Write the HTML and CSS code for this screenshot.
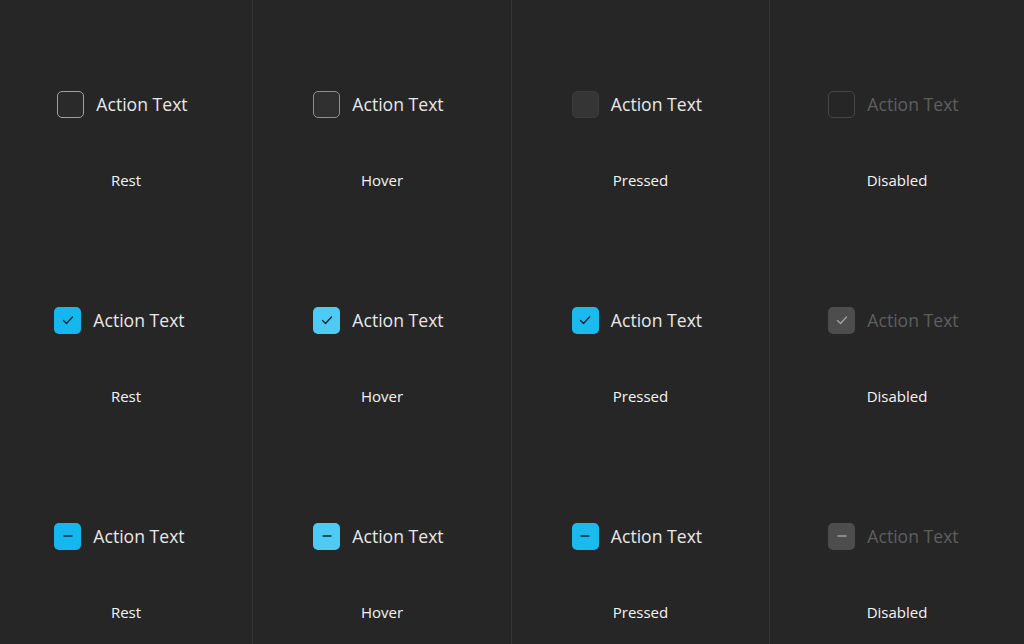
FILE: index.html
```html
<!DOCTYPE html>
<html>
<head>
<meta charset="utf-8">
<link rel="stylesheet" href="styles.css">
</head>
<body>
<div class="grid">
  <div class="col">
    <div class="cell">
      <div class="item"><span class="box unchecked rest"></span><span class="text">Action Text</span></div>
      <div class="label">Rest</div>
    </div>
    <div class="cell">
      <div class="item shift"><span class="box checked rest"><svg viewBox="0 0 26 26"><path d="M8.5 13.5 L11.5 16.5 L17.5 10" /></svg></span><span class="text">Action Text</span></div>
      <div class="label">Rest</div>
    </div>
    <div class="cell">
      <div class="item shift"><span class="box checked rest"><svg viewBox="0 0 26 26"><path d="M9 13 L17 13" /></svg></span><span class="text">Action Text</span></div>
      <div class="label">Rest</div>
    </div>
  </div>
  <div class="col">
    <div class="cell">
      <div class="item"><span class="box unchecked hover"></span><span class="text">Action Text</span></div>
      <div class="label">Hover</div>
    </div>
    <div class="cell">
      <div class="item"><span class="box checked hover"><svg viewBox="0 0 26 26"><path d="M8.5 13.5 L11.5 16.5 L17.5 10" /></svg></span><span class="text">Action Text</span></div>
      <div class="label">Hover</div>
    </div>
    <div class="cell">
      <div class="item"><span class="box checked hover"><svg viewBox="0 0 26 26"><path d="M9 13 L17 13" /></svg></span><span class="text">Action Text</span></div>
      <div class="label">Hover</div>
    </div>
  </div>
  <div class="col">
    <div class="cell">
      <div class="item"><span class="box unchecked pressed"></span><span class="text">Action Text</span></div>
      <div class="label">Pressed</div>
    </div>
    <div class="cell">
      <div class="item"><span class="box checked pressed"><svg viewBox="0 0 26 26"><path d="M8.5 13.5 L11.5 16.5 L17.5 10" /></svg></span><span class="text">Action Text</span></div>
      <div class="label">Pressed</div>
    </div>
    <div class="cell">
      <div class="item"><span class="box checked pressed"><svg viewBox="0 0 26 26"><path d="M9 13 L17 13" /></svg></span><span class="text">Action Text</span></div>
      <div class="label">Pressed</div>
    </div>
  </div>
  <div class="col">
    <div class="cell">
      <div class="item disabled"><span class="box unchecked"></span><span class="text">Action Text</span></div>
      <div class="label">Disabled</div>
    </div>
    <div class="cell">
      <div class="item disabled"><span class="box checked"><svg viewBox="0 0 26 26"><path d="M8.5 13.5 L11.5 16.5 L17.5 10" /></svg></span><span class="text">Action Text</span></div>
      <div class="label">Disabled</div>
    </div>
    <div class="cell">
      <div class="item disabled"><span class="box checked"><svg viewBox="0 0 26 26"><path d="M9 13 L17 13" /></svg></span><span class="text">Action Text</span></div>
      <div class="label">Disabled</div>
    </div>
  </div>
</div>
</body>
</html>
```
FILE: styles.css
```css
html, body {
  margin: 0;
  padding: 0;
  background: #262626;
  overflow: hidden;
}
body {
  width: 1024px;
  height: 644px;
  font-family: "Open Sans", "Noto Sans", sans-serif;
}
.grid {
  display: grid;
  grid-template-columns: 252px 259px 258px 255px;
  height: 644px;
}
.col {
  display: flex;
  flex-direction: column;
}
.col + .col {
  border-left: 1px solid #353535;
}
.cell {
  height: 216px;
  flex: none;
  display: flex;
  flex-direction: column;
  align-items: center;
}
.item {
  display: flex;
  align-items: center;
  gap: 12px;
  margin-top: 90px;
  height: 28px;
  padding-right: 7px;
}
.item.shift {
  padding-right: 13px;
}
.text {
  font-size: 17.6px;
  color: #e8e8e8;
  line-height: 28px;
}
.label {
  margin-top: 52px;
  font-size: 15px;
  color: #f4f4f4;
  line-height: 20px;
}
.box {
  width: 27px;
  height: 27px;
  box-sizing: border-box;
  border-radius: 5px;
  display: flex;
  align-items: center;
  justify-content: center;
}
.box svg {
  width: 26px;
  height: 26px;
  fill: none;
  stroke: #0f2733;
  stroke-width: 1.4;
  stroke-linecap: round;
  stroke-linejoin: round;
}
.box.unchecked.rest {
  border: 1.5px solid #a0a0a0;
  background: #2a2a2a;
}
.box.unchecked.hover {
  border: 1.5px solid #8f8f8f;
  background: #303030;
}
.box.unchecked.pressed {
  border: 1.5px solid #3c3c3c;
  background: #353535;
}
.box.checked.rest {
  background: #14b8ef;
}
.box.checked.hover {
  background: #4dcbf5;
}
.box.checked.pressed {
  background: #1cb9ee;
}
.disabled .text {
  color: #5e5e5e;
}
.disabled .box.unchecked {
  border: 1.5px solid #474747;
  background: #262626;
}
.disabled .box.checked {
  background: #4d4d4d;
}
.disabled .box svg {
  stroke: #a0a0a0;
}
```
